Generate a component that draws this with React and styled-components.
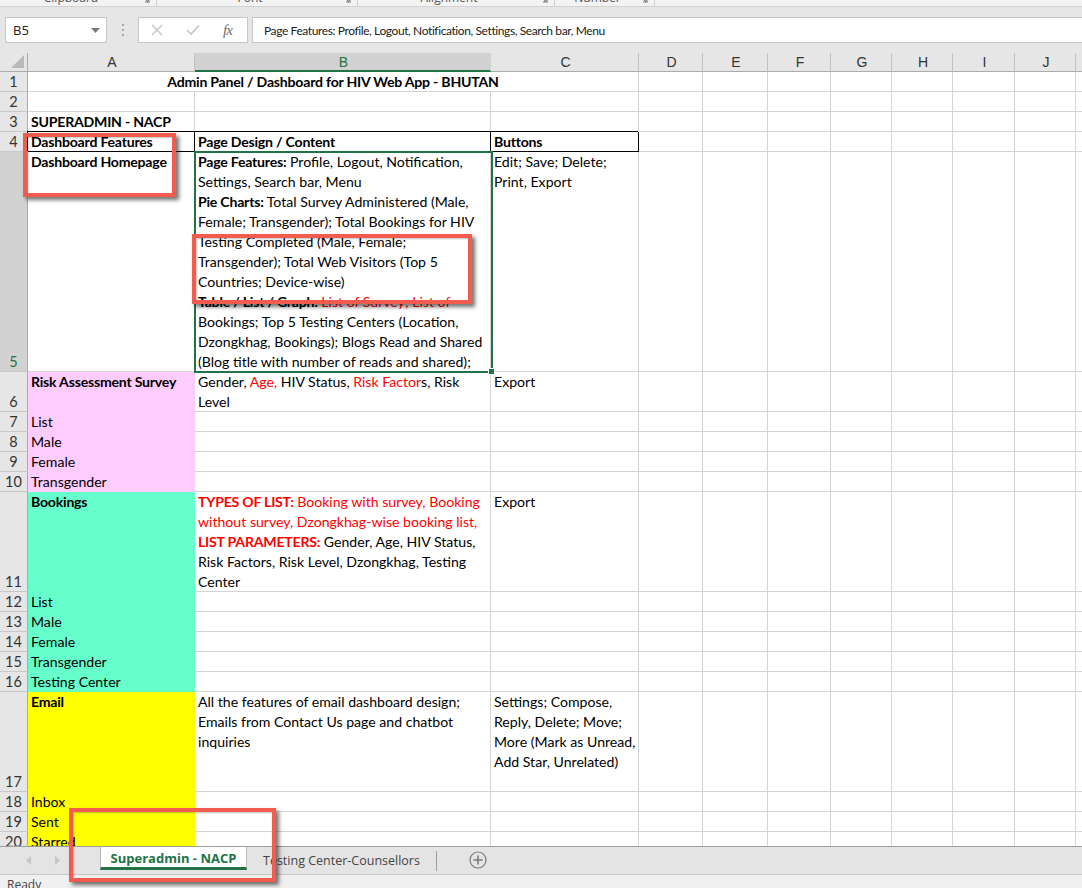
import React from "react";
import styled, { createGlobalStyle } from "styled-components";

const GREEN = "#217346";
const RED = "#ff0000";
const GRID = "#d4d4d4";
const ANNOT = "#f25c4f";
const CELL_FONT = `Lato, "Liberation Sans", sans-serif`;
const UI_FONT = `"Open Sans", "Noto Sans", sans-serif`;

const GlobalStyle = createGlobalStyle`
  html, body { margin: 0; padding: 0; background: #fff; }
  body { font-family: ${CELL_FONT}; }
  * { box-sizing: border-box; }
`;

const Window = styled.div`
  width: 1082px;
  height: 888px;
  display: flex;
  flex-direction: column;
  overflow: hidden;
  position: relative;
  background: #e6e6e6;
`;

/* ---------- ribbon remnant ---------- */
const RibbonStrip = styled.div`
  height: 7px;
  flex: none;
  display: flex;
  background: #f3f3f3;
  border-bottom: 1px solid #d2d2d2;
  overflow: hidden;
`;

const RibbonGroup = styled.div`
  flex: ${(p) => (p.$w ? "none" : "1")};
  width: ${(p) => (p.$w ? `${p.$w}px` : "auto")};
  position: relative;
  display: flex;
  justify-content: center;
  border-right: ${(p) => (p.$w ? "1px solid #d2d2d2" : "none")};
`;

const RibbonLabel = styled.span`
  font: 12px/12px ${UI_FONT};
  color: #555;
  margin-top: -8px;
  margin-left: -14px;
`;

const Launcher = styled.svg`
  position: absolute;
  right: 6px;
  top: -4px;
`;

/* ---------- formula bar ---------- */
const FormulaBar = styled.div`
  height: 46px;
  flex: none;
  display: flex;
  align-items: flex-start;
  padding: 10px 0 0 5px;
`;

const NameBox = styled.div`
  width: 102px;
  height: 26px;
  background: #fff;
  border: 1px solid #c6c6c6;
  display: flex;
  align-items: center;
  justify-content: space-between;
  padding: 0 6px 0 7px;
  font: 13px ${UI_FONT};
  color: #222;
`;

const Dots = styled.div`
  width: 31px;
  height: 26px;
  display: flex;
  flex-direction: column;
  align-items: center;
  justify-content: center;
  gap: 3px;
  & > i {
    width: 2px;
    height: 2px;
    background: #aaa;
  }
`;

const FxBox = styled.div`
  width: 110px;
  height: 26px;
  background: #fff;
  border: 1px solid #c6c6c6;
  display: flex;
  align-items: center;
  padding-left: 12px;
  gap: 23px;
`;

const FxGlyph = styled.span`
  font: italic 15px "Liberation Serif", serif;
  color: #6d6d6d;
  letter-spacing: -1px;
`;

const FormulaInput = styled.div`
  flex: 1;
  margin-left: 4px;
  height: 26px;
  background: #fff;
  border: 1px solid #c6c6c6;
  border-right: none;
  display: flex;
  align-items: center;
  padding-left: 11px;
  font: 12px ${CELL_FONT};
  letter-spacing: -0.4px;
  color: #222;
  white-space: nowrap;
`;

/* ---------- sheet ---------- */
const Sheet = styled.div`
  flex: 1;
  min-height: 0;
  overflow: hidden;
  background: #fff;
`;

const Grid = styled.div`
  display: grid;
  grid-template-columns: 28px 167px 296px 148px 64px 65px 63px 61px 61px 62px 61px 1fr;
  grid-template-rows: ${(p) => p.$rows};
`;

const Corner = styled.div`
  background: #e6e6e6;
  border-right: 1px solid #ababab;
  border-bottom: 1px solid #ababab;
  display: flex;
  align-items: flex-end;
  justify-content: flex-end;
  padding: 0 3px 3px 0;
  & > i {
    width: 0;
    height: 0;
    border-left: 13px solid transparent;
    border-bottom: 13px solid #b9b9b9;
  }
`;

const ColHead = styled.div`
  background: ${(p) => (p.$sel ? "#d2d2d2" : "#e6e6e6")};
  border-right: 1px solid ${(p) => (p.$sel ? "#d2d2d2" : "#c2c2c2")};
  border-bottom: ${(p) => (p.$sel ? `2px solid ${GREEN}` : "1px solid #ababab")};
  display: flex;
  align-items: center;
  justify-content: center;
  font: 14px "Liberation Sans", Arial, sans-serif;
  color: ${(p) => (p.$sel ? GREEN : "#333")};
  padding: ${(p) => (p.$sel ? "1px 0 0 2px" : "0 0 0 2px")};
`;

const RowHead = styled.div`
  background: ${(p) => (p.$sel ? "#d2d2d2" : "#e6e6e6")};
  border-right: 1px solid #ababab;
  border-bottom: 1px solid #c8c8c8;
  display: flex;
  align-items: flex-end;
  justify-content: center;
  font: 14.5px/19px ${CELL_FONT};
  color: ${(p) => (p.$sel ? GREEN : "#333")};
`;

const Cell = styled.div`
  grid-column: ${(p) => (p.$span ? `span ${p.$span}` : "auto")};
  background: ${(p) => p.$fill || "#fff"};
  border-right: 1px solid ${(p) => (p.$boxed ? "#000" : p.$fill || GRID)};
  border-bottom: 1px solid ${(p) => (p.$boxed ? "#000" : p.$fill || GRID)};
  box-shadow: ${(p) => (p.$boxed ? "-1px -1px 0 #000" : "none")};
  padding: 0 3px;
  font: 14.1px/20px ${CELL_FONT};
  color: #000;
  text-align: ${(p) => (p.$center ? "center" : "left")};
  white-space: nowrap;
  min-width: 0;
`;

const Line = styled.div`
  height: 20px;
`;

const Seg = styled.span`
  font-weight: ${(p) => (p.$b ? 700 : 400)};
  letter-spacing: ${(p) => (p.$b ? "-0.22px" : "0")};
  color: ${(p) => (p.$r ? RED : "inherit")};
`;

/* ---------- sheet tabs / status ---------- */
const TabBar = styled.div`
  height: 28px;
  flex: none;
  display: flex;
  align-items: flex-start;
  background: #e4e4e4;
  border-top: 1px solid #9d9d9d;
`;

const TabNav = styled.div`
  width: 100px;
  height: 27px;
  display: flex;
  align-items: center;
  padding-left: 26px;
  gap: 22px;
`;

const ActiveTab = styled.div`
  width: 147px;
  height: 23px;
  background: #fff;
  border-left: 1px solid #b8b8b8;
  border-right: 1px solid #b8b8b8;
  border-bottom: 3px solid ${GREEN};
  display: flex;
  align-items: center;
  justify-content: center;
  font: 700 13px ${UI_FONT};
  color: ${GREEN};
  padding-top: 2px;
`;

const Tab = styled.div`
  height: 27px;
  display: flex;
  align-items: center;
  padding: 0 16px;
  font: 12.5px ${UI_FONT};
  color: #444;
`;

const TabSep = styled.div`
  width: 1px;
  height: 20px;
  margin-top: 4px;
  background: #9d9d9d;
`;

const AddSheet = styled.svg`
  margin: 4px 0 0 32px;
`;

const StatusBar = styled.div`
  height: 14px;
  flex: none;
  background: #f0f0f0;
  border-top: 1px solid #c6c6c6;
  padding-left: 7px;
  font: 12px/20px ${UI_FONT};
  color: #444;
  overflow: hidden;
`;

/* ---------- overlays ---------- */
const Selection = styled.div`
  position: absolute;
  left: 194px;
  top: 151px;
  width: 299px;
  height: 222px;
  border: 2px solid ${GREEN};
  pointer-events: none;
`;

const FillHandle = styled.div`
  position: absolute;
  left: 488px;
  top: 368px;
  width: 7px;
  height: 7px;
  background: ${GREEN};
  border: 1px solid #fff;
`;

const Callout = styled.div`
  position: absolute;
  left: ${(p) => p.$x}px;
  top: ${(p) => p.$y}px;
  width: ${(p) => p.$w}px;
  height: ${(p) => p.$h}px;
  border: 4px solid ${ANNOT};
  box-shadow: 3px 3px 4px rgba(0, 0, 0, 0.55), inset 1px 1px 2px rgba(0, 0, 0, 0.25);
  pointer-events: none;
`;

/* ---------- data ---------- */
const b = (t) => [t, "b"];
const r = (t) => [t, "r"];
const br = (t) => [t, "br"];

const PINK = "#ffccff";
const MINT = "#66ffcc";
const YELLOW = "#ffff00";

const rows = [
  { n: 1, h: 20, title: [[b("Admin Panel / Dashboard for HIV Web App - BHUTAN")]] },
  { n: 2, h: 20 },
  { n: 3, h: 20, A: [[b("SUPERADMIN - NACP")]] },
  {
    n: 4,
    h: 20,
    boxed: true,
    A: [[b("Dashboard Features")]],
    B: [[b("Page Design / Content")]],
    C: [[b("Buttons")]],
  },
  {
    n: 5,
    h: 220,
    sel: true,
    A: [[b("Dashboard Homepage")]],
    B: [
      [b("Page Features:"), " Profile, Logout, Notification,"],
      ["Settings, Search bar, Menu"],
      [b("Pie Charts:"), " Total Survey Administered (Male,"],
      ["Female; Transgender); Total Bookings for HIV"],
      ["Testing Completed (Male, Female;"],
      ["Transgender); Total Web Visitors (Top 5"],
      ["Countries; Device-wise)"],
      [b("Table / List / Graph:"), " ", r("List of Survey; List of")],
      ["Bookings; Top 5 Testing Centers (Location,"],
      ["Dzongkhag, Bookings); Blogs Read and Shared"],
      ["(Blog title with number of reads and shared);"],
    ],
    C: [["Edit; Save; Delete;"], ["Print, Export"]],
  },
  {
    n: 6,
    h: 40,
    fill: PINK,
    A: [[b("Risk Assessment Survey")]],
    B: [["Gender, ", r("Age,"), " HIV Status, ", r("Risk Factor"), "s, Risk"], ["Level"]],
    C: [["Export"]],
  },
  { n: 7, h: 20, fill: PINK, A: [["List"]] },
  { n: 8, h: 20, fill: PINK, A: [["Male"]] },
  { n: 9, h: 20, fill: PINK, A: [["Female"]] },
  { n: 10, h: 20, fill: PINK, A: [["Transgender"]] },
  {
    n: 11,
    h: 100,
    fill: MINT,
    A: [[b("Bookings")]],
    B: [
      [br("TYPES OF LIST:"), r(" Booking with survey, Booking")],
      [r("without survey, Dzongkhag-wise booking list,")],
      [br("LIST PARAMETERS:"), " Gender, Age, HIV Status,"],
      ["Risk Factors, Risk Level, Dzongkhag, Testing"],
      ["Center"],
    ],
    C: [["Export"]],
  },
  { n: 12, h: 20, fill: MINT, A: [["List"]] },
  { n: 13, h: 20, fill: MINT, A: [["Male"]] },
  { n: 14, h: 20, fill: MINT, A: [["Female"]] },
  { n: 15, h: 20, fill: MINT, A: [["Transgender"]] },
  { n: 16, h: 20, fill: MINT, A: [["Testing Center"]] },
  {
    n: 17,
    h: 100,
    fill: YELLOW,
    A: [[b("Email")]],
    B: [
      ["All the features of email dashboard design;"],
      ["Emails from Contact Us page and chatbot"],
      ["inquiries"],
    ],
    C: [["Settings; Compose,"], ["Reply, Delete; Move;"], ["More (Mark as Unread,"], ["Add Star, Unrelated)"]],
  },
  { n: 18, h: 20, fill: YELLOW, A: [["Inbox"]] },
  { n: 19, h: 20, fill: YELLOW, A: [["Sent"]] },
  { n: 20, h: 20, fill: YELLOW, A: [["Starred"]] },
  { n: 21, h: 20 },
];

const LETTERS = ["A", "B", "C", "D", "E", "F", "G", "H", "I", "J", ""];

function Lines({ lines }) {
  if (!lines) return null;
  return lines.map((line, i) => (
    <Line key={i}>
      {line.map((seg, j) =>
        typeof seg === "string" ? (
          <React.Fragment key={j}>{seg}</React.Fragment>
        ) : (
          <Seg key={j} $b={seg[1].includes("b")} $r={seg[1].includes("r")}>
            {seg[0]}
          </Seg>
        )
      )}
    </Line>
  ));
}

function SheetRow({ row }) {
  const blanks = Array.from({ length: 8 }, (_, i) => <Cell key={`e${i}`} />);
  return (
    <>
      <RowHead $sel={row.sel}>{row.n}</RowHead>
      {row.title ? (
        <Cell $span={3} $center>
          <Lines lines={row.title} />
        </Cell>
      ) : (
        <>
          <Cell $fill={row.fill} $boxed={row.boxed}>
            <Lines lines={row.A} />
          </Cell>
          <Cell $boxed={row.boxed}>
            <Lines lines={row.B} />
          </Cell>
          <Cell $boxed={row.boxed}>
            <Lines lines={row.C} />
          </Cell>
        </>
      )}
      {blanks}
    </>
  );
}

function Arrow({ dir }) {
  return (
    <svg width="6" height="9" viewBox="0 0 6 9">
      <path d={dir === "l" ? "M5 0 L0 4.5 L5 9 Z" : "M1 0 L6 4.5 L1 9 Z"} fill="#c6c6c6" />
    </svg>
  );
}

function LaunchIcon() {
  return (
    <Launcher width="8" height="8" viewBox="0 0 8 8">
      <path d="M1 1 L6 6 M6 3 V6 H3 M1 1 H7 V7" fill="none" stroke="#777" strokeWidth="1" />
    </Launcher>
  );
}

export default function App() {
  const rowTemplate = ["19px", ...rows.map((row) => `${row.h}px`)].join(" ");
  return (
    <Window>
      <GlobalStyle />
      <RibbonStrip>
        <RibbonGroup $w={157}>
          <RibbonLabel>Clipboard</RibbonLabel>
          <LaunchIcon />
        </RibbonGroup>
        <RibbonGroup $w={201}>
          <RibbonLabel>Font</RibbonLabel>
          <LaunchIcon />
        </RibbonGroup>
        <RibbonGroup $w={197}>
          <RibbonLabel>Alignment</RibbonLabel>
          <LaunchIcon />
        </RibbonGroup>
        <RibbonGroup $w={100}>
          <RibbonLabel>Number</RibbonLabel>
          <LaunchIcon />
        </RibbonGroup>
        <RibbonGroup />
      </RibbonStrip>

      <FormulaBar>
        <NameBox>
          <span>B5</span>
          <svg width="9" height="5" viewBox="0 0 9 5">
            <path d="M0 0 H9 L4.5 5 Z" fill="#7a7a7a" />
          </svg>
        </NameBox>
        <Dots>
          <i />
          <i />
          <i />
        </Dots>
        <FxBox>
          <svg width="12" height="12" viewBox="0 0 12 12">
            <path d="M1 1 L11 11 M11 1 L1 11" stroke="#c4c4c4" strokeWidth="1.4" />
          </svg>
          <svg width="14" height="12" viewBox="0 0 14 12">
            <path d="M1 6 L5 10 L13 1.5" fill="none" stroke="#c4c4c4" strokeWidth="1.6" />
          </svg>
          <FxGlyph>fx</FxGlyph>
        </FxBox>
        <FormulaInput>Page Features: Profile, Logout, Notification, Settings, Search bar, Menu</FormulaInput>
      </FormulaBar>

      <Sheet>
        <Grid $rows={rowTemplate}>
          <Corner>
            <i />
          </Corner>
          {LETTERS.map((l, i) => (
            <ColHead key={i} $sel={l === "B"}>
              {l}
            </ColHead>
          ))}
          {rows.map((row) => (
            <SheetRow key={row.n} row={row} />
          ))}
        </Grid>
      </Sheet>

      <TabBar>
        <TabNav>
          <Arrow dir="l" />
          <Arrow dir="r" />
        </TabNav>
        <ActiveTab>Superadmin - NACP</ActiveTab>
        <Tab>Testing Center-Counsellors</Tab>
        <TabSep />
        <AddSheet width="18" height="18" viewBox="0 0 18 18">
          <circle cx="9" cy="9" r="8" fill="none" stroke="#7a7a7a" strokeWidth="1.2" />
          <path d="M9 4.5 V13.5 M4.5 9 H13.5" stroke="#7a7a7a" strokeWidth="1.6" />
        </AddSheet>
      </TabBar>
      <StatusBar>Ready</StatusBar>

      <Selection />
      <FillHandle />
      <Callout $x={23} $y={133} $w={153} $h={64} />
      <Callout $x={192} $y={234} $w={280} $h={70} />
      <Callout $x={69} $y={808} $w={207} $h={74} />
    </Window>
  );
}
